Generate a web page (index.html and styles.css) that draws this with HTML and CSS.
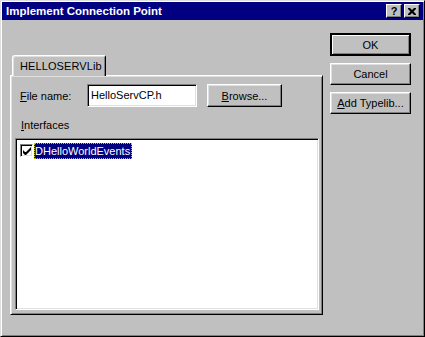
FILE: index.html
```html
<!DOCTYPE html>
<html lang="en">
<head>
  <meta charset="UTF-8">
  <title>Implement Connection Point</title>
  <link rel="stylesheet" href="styles.css">
</head>
<body>

<div class="window">
  <div class="titlebar">
    <span class="title">Implement Connection Point</span>
    <div class="title-buttons">
      <span class="tbtn">?</span>
      <span class="tbtn">
        <svg width="8" height="7" viewBox="0 0 8 7">
          <path d="M0 0h2l2 2 2-2h2v1l-2.5 2.5 2.5 2.5v1h-2l-2-2-2 2h-2v-1l2.5-2.5-2.5-2.5z" fill="#000"/>
        </svg>
      </span>
    </div>
  </div>

  <div class="client">
    <div class="tabs">
      <div class="tab">HELLOSERVLib</div>
      <div class="panel">
        <div class="row">
          <span class="lbl"><u>F</u>ile name:</span>
          <div class="input">HelloServCP.h</div>
          <div class="btn browse"><u>B</u>rowse...</div>
        </div>
        <div class="lbl ifaces"><u>I</u>nterfaces</div>
        <div class="list">
          <div class="item">
            <span class="check">
              <svg width="8" height="8" viewBox="0 0 8 8">
                <path d="M0 3v3l2 2h1l5-5v-3l-5 5h-1z" fill="#000"/>
              </svg>
            </span>
            <span class="sel">DHelloWorldEvents</span>
          </div>
        </div>
      </div>
    </div>

    <div class="buttons">
      <div class="btn default">OK</div>
      <div class="btn">Cancel</div>
      <div class="btn"><u>A</u>dd Typelib...</div>
    </div>
  </div>
</div>

</body>
</html>
```

FILE: styles.css
```css
body {
  margin: 0;
  background: #c0c0c0;
  font-family: "Liberation Sans", Arial, sans-serif;
  font-size: 11px;
  color: #000;
}

.window {
  width: 425px;
  height: 337px;
  box-sizing: border-box;
  border: 1px solid;
  border-color: #dfdfdf #000 #000 #dfdfdf;
  box-shadow: inset 1px 1px #fff, inset -1px -1px #808080;
  padding: 1px;
  background: #c0c0c0;
}

/* barra del titolo */
.titlebar {
  height: 18px;
  background: #000080;
  display: flex;
  align-items: center;
  justify-content: space-between;
  padding: 0 3px 0 4px;
}

.title {
  color: #fff;
  font-weight: bold;
  font-size: 11.5px;
}

.title-buttons {
  display: flex;
  gap: 2px;
}

.tbtn {
  width: 16px;
  height: 14px;
  box-sizing: border-box;
  background: #c0c0c0;
  border: 1px solid;
  border-color: #fff #000 #000 #fff;
  box-shadow: inset -1px -1px #808080;
  display: flex;
  align-items: center;
  justify-content: center;
  font-weight: bold;
  font-size: 11px;
  line-height: 1;
}

/* area client */
.client {
  display: flex;
  gap: 7px;
  padding-left: 8px;
}

.tabs {
  margin-top: 35px;
  display: flex;
  flex-direction: column;
}

.tab {
  position: relative;
  z-index: 1;
  width: 94px;
  height: 21px;
  margin-left: 2px;
  margin-bottom: -1px;
  box-sizing: border-box;
  background: #c0c0c0;
  border: 1px solid;
  border-color: #fff #000 transparent #fff;
  border-bottom: none;
  border-radius: 3px 2px 0 0;
  box-shadow: inset 1px 1px #dfdfdf, inset -1px 0 #808080;
  padding: 4px 0 0 7px;
  letter-spacing: 0.1px;
}

.panel {
  width: 313px;
  height: 240px;
  box-sizing: border-box;
  border: 1px solid;
  border-color: #fff #000 #000 #fff;
  box-shadow: inset 1px 1px #dfdfdf, inset -1px -1px #808080;
  padding: 8px 0 0 4px;
}

.row {
  display: flex;
  align-items: center;
  height: 23px;
}

.row .lbl {
  width: 67px;
  padding-left: 5px;
}

.input {
  width: 110px;
  height: 23px;
  box-sizing: border-box;
  background: #fff;
  border: 1px solid;
  border-color: #808080 #fff #fff #808080;
  box-shadow: inset 1px 1px #000, inset -1px -1px #dfdfdf;
  padding: 4px 0 0 3px;
}

.ifaces {
  margin: 12px 0 0 6px;
  height: 19px;
}

.list {
  width: 304px;
  height: 172px;
  box-sizing: border-box;
  background: #fff;
  border: 1px solid;
  border-color: #808080 #fff #fff #808080;
  box-shadow: inset 1px 1px #000, inset -1px -1px #dfdfdf;
  padding: 2px 0 0 4px;
}

.item {
  display: flex;
  align-items: center;
  height: 19px;
}

.check {
  width: 13px;
  height: 13px;
  box-sizing: border-box;
  background: #fff;
  border: 1px solid;
  border-color: #808080 #fff #fff #808080;
  box-shadow: inset 1px 1px #000, inset -1px -1px #dfdfdf;
  display: flex;
  align-items: center;
  justify-content: center;
}

.sel {
  margin-left: 1px;
  background: #000080;
  color: #fff;
  outline: 1px dotted #c8c800;
  outline-offset: -1px;
  height: 16px;
  line-height: 16px;
  padding: 0 2px 0 1px;
}

/* pulsanti */
.btn {
  box-sizing: border-box;
  width: 81px;
  height: 22px;
  background: #c0c0c0;
  border: 1px solid;
  border-color: #fff #000 #000 #fff;
  box-shadow: inset -1px -1px #808080, inset 1px 1px #dfdfdf;
  display: flex;
  align-items: center;
  justify-content: center;
}

.browse {
  width: 75px;
  height: 23px;
  margin-left: 10px;
}

.buttons {
  margin-top: 13px;
  display: flex;
  flex-direction: column;
  gap: 7px;
}

.default {
  height: 23px;
  border: 2px solid #000;
  border-color: #000;
  box-shadow: inset 1px 1px #fff, inset -1px -1px #808080;
}
```
